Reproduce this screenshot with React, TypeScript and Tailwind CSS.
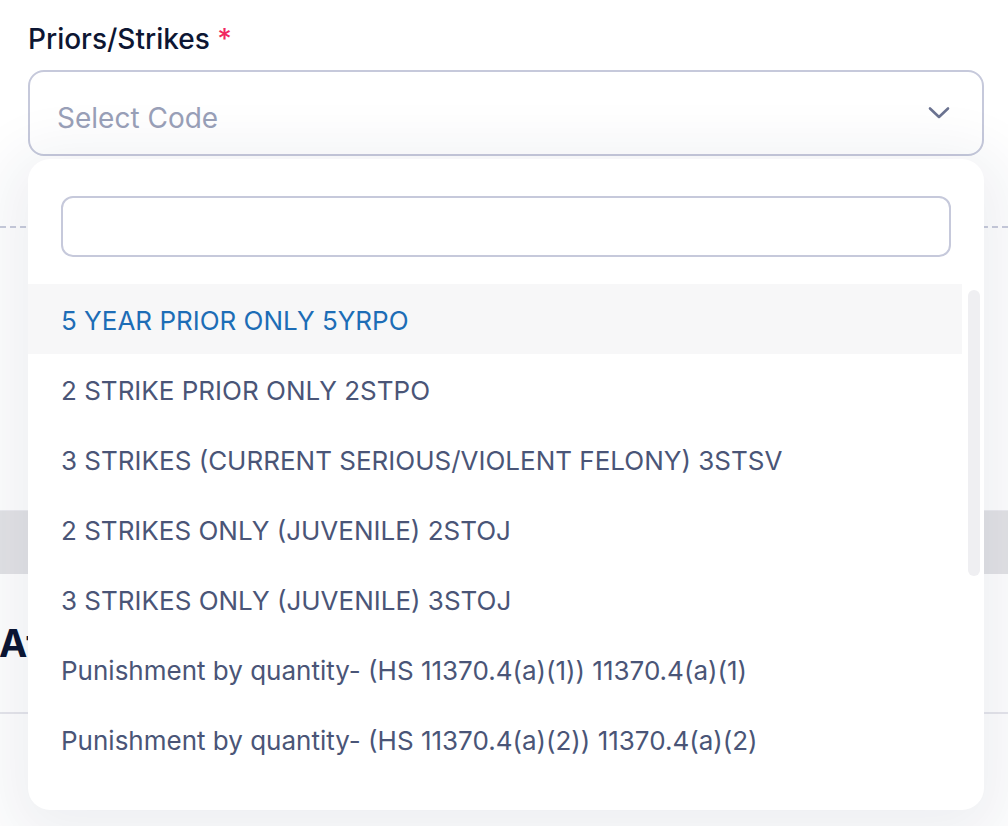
import React from 'react';

const codes = [
  '5 YEAR PRIOR ONLY 5YRPO',
  '2 STRIKE PRIOR ONLY 2STPO',
  '3 STRIKES (CURRENT SERIOUS/VIOLENT FELONY) 3STSV',
  '2 STRIKES ONLY (JUVENILE) 2STOJ',
  '3 STRIKES ONLY (JUVENILE) 3STOJ',
  'Punishment by quantity- (HS 11370.4(a)(1)) 11370.4(a)(1)',
  'Punishment by quantity- (HS 11370.4(a)(2)) 11370.4(a)(2)',
];

const App = () => {
  return (
    <div className="relative h-[826px] w-full overflow-hidden bg-white font-['Inter','Liberation_Sans',sans-serif]">
      {/* form behind the menu */}
      <div className="pl-[28px] pr-[24px] pt-[22px]">
        <label className="block text-[28px] leading-[34px] font-medium text-[#0d1633]">
          Priors/Strikes <span className="text-[#f12660]">*</span>
        </label>
        <div className="mt-[14px] flex h-[86px] items-center justify-between rounded-[16px] border-2 border-[#c6c9db] bg-white pl-[27px] pr-[32px]">
          <span className="mt-[10px] text-[28px] leading-[34px] text-[#99a0b8]">Select Code</span>
          <svg width="22" height="14" viewBox="0 0 22 14" fill="none" className="mt-[-1px]">
            <path d="M2 2.5 L11 11 L20 2.5" stroke="#6b7391" strokeWidth="2.6" strokeLinecap="round" strokeLinejoin="round" />
          </svg>
        </div>
      </div>
      <div className="mt-[70px] border-t-2 border-dashed border-[#c9ccdc]" />
      <div className="h-[282px]" />
      <div className="h-[64px] border-t border-[#ececf0] bg-[#e3e3e6]" />
      <div className="h-[140px] border-b-2 border-[#e6e6ec] pt-[46px]">
        <h2 className="ml-[-1px] text-[38px] leading-[46px] font-bold text-[#0b1533]">Attorney Information</h2>
      </div>

      {/* open dropdown */}
      <div className="absolute left-[28px] top-[159px] w-[956px] rounded-[22px] bg-white pt-[37px] pb-[36px] shadow-[0_14px_60px_22px_rgba(30,40,80,0.07)]">
        <div className="mx-[33px] h-[61px] rounded-[12px] border-2 border-[#c6c9db] bg-white" />
        <div className="mt-[27px] flex">
          <ul className="flex-1">
            {codes.map((code, i) => (
              <li
                key={i}
                className={
                  i === 0
                    ? 'flex h-[70px] items-center bg-[#f7f7f8] pl-[33px] pt-[3px] text-[26px] text-[#1d6db6]'
                    : 'flex h-[70px] items-center pl-[33px] pt-[3px] text-[26px] text-[#4a5577]'
                }
              >
                {code}
              </li>
            ))}
          </ul>
          <div className="w-[22px] pl-[6px] pt-[6px]">
            <div className="h-[286px] w-[12px] rounded-full bg-[#efeff2]" />
          </div>
        </div>
      </div>
    </div>
  );
};

export default App;
